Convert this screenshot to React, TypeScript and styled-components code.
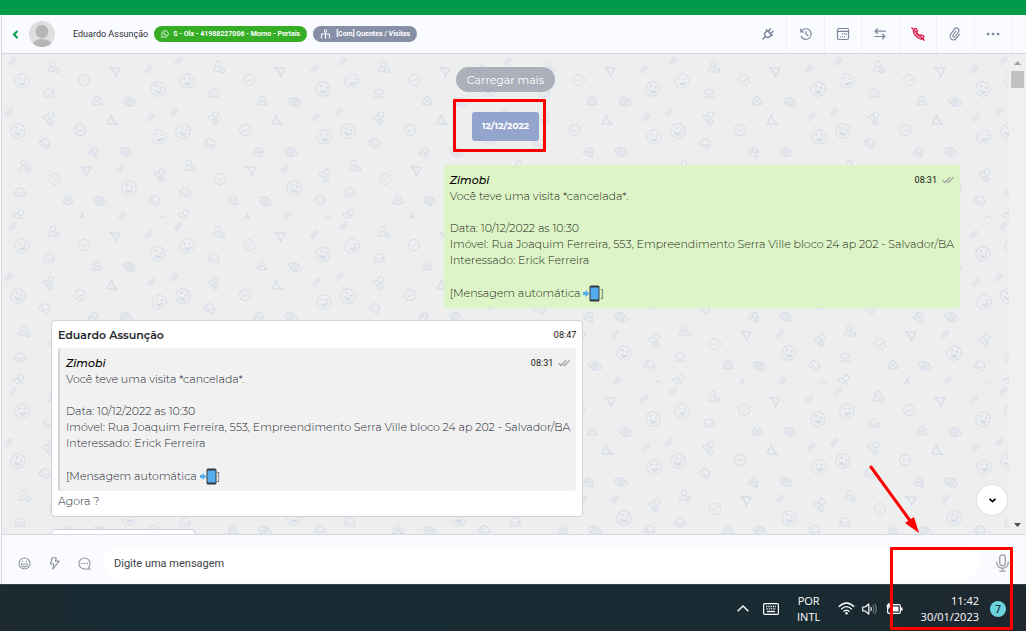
import React from "react";
import styled, { createGlobalStyle, css } from "styled-components";

const ui = `"Open Sans", "Noto Sans", sans-serif`;
const compact = `Roboto, "Open Sans", sans-serif`;
const body = `"Montserrat", Inter, "Open Sans", sans-serif`;
const line = "#d5d8e2";
const surface = "#fafbff";
const muted = "#7d869c";
const doodle = "#d9dbe8";

const GlobalStyle = createGlobalStyle`
  *, *::before, *::after { box-sizing: border-box; }
  body { margin: 0; background: ${surface}; font-family: ${ui}; }
  button, input { font: inherit; border: 0; padding: 0; background: none; color: inherit; }
  button { cursor: pointer; }
  p, h1, h2 { margin: 0; }
  svg { display: block; }
`;

const Page = styled.div`
  position: relative;
  display: flex;
  flex-direction: column;
  height: 100vh;
  overflow: hidden;
`;

const TopBar = styled.div`
  flex: 0 0 15px;
  background: #009b4a;
`;

const Main = styled.main`
  flex: 1;
  min-height: 0;
  display: flex;
  flex-direction: column;
  margin-left: 1px;
  border-left: 1px solid ${line};
`;

const Header = styled.header`
  flex: 0 0 39px;
  display: flex;
  align-items: center;
  padding: 0 14px 0 7px;
  background: ${surface};
  border-bottom: 1px solid ${line};
`;

const BackButton = styled.button`
  display: flex;
  width: 12px;
  margin-right: 8px;
  justify-content: center;
`;

const ContactName = styled.h1`
  margin: 0 6px 0 18px;
  font-family: ${compact};
  font-size: 9px;
  line-height: 16px;
  font-weight: 400;
  color: #2b2f36;
  white-space: nowrap;
`;

const Tag = styled.span<{ $color: string; $gap: number }>`
  display: flex;
  align-items: center;
  gap: ${(p) => p.$gap}px;
  height: 16px;
  padding: 0 7px;
  margin-right: 6px;
  border-radius: 8px;
  background: ${(p) => p.$color};
  color: #fff;
  font-family: ${compact};
  font-size: 7px;
  line-height: 16px;
  font-weight: 700;
  white-space: nowrap;
`;

const Tools = styled.nav`
  display: flex;
  align-self: stretch;
  flex: 0 0 262px;
  margin-left: auto;
`;

const ToolButton = styled.button<{ $danger?: boolean }>`
  flex: 1;
  display: flex;
  align-items: center;
  justify-content: center;
  border-right: 1px solid #f1f2f7;
  color: ${(p) => (p.$danger ? "#e0214f" : muted)};
`;

const ChatArea = styled.section`
  position: relative;
  flex: 1;
  min-height: 0;
  display: flex;
  background: #edefee;
`;

const Wallpaper = styled.svg`
  position: absolute;
  inset: 0;
  width: 100%;
  height: 100%;
`;

const Messages = styled.div`
  position: relative;
  flex: 1;
  display: flex;
  flex-direction: column;
  padding: 13px 49px 0;
  overflow: hidden;
  font-family: ${body};
`;

const LoadMore = styled.button`
  flex: none;
  align-self: center;
  height: 25px;
  padding: 0 11px;
  border-radius: 13px;
  background: #abb0bb;
  color: #fff;
  font-size: 11px;
  line-height: 16px;
`;

const highlight = css`
  position: absolute;
  border: 3px solid #fe0000;
  border-radius: 1px;
  pointer-events: none;
`;

const DateBadge = styled.div`
  position: relative;
  flex: none;
  align-self: center;
  margin: 20px 0 24px;
  padding: 6px 10px 7px;
  border-radius: 3px;
  background: #94a5cd;
  color: #fff;
  font-size: 9px;
  line-height: 16px;
  font-weight: 700;
`;

const DateHighlight = styled.div`
  ${highlight}
  inset: -13px -7px -11px -19px;
`;

const ClockHighlight = styled.div`
  ${highlight}
  right: 13px;
  bottom: 1px;
  width: 123px;
  height: 83px;
`;

const SentBubble = styled.article`
  flex: none;
  align-self: flex-end;
  padding: 7px 6px;
  border-radius: 3px;
  background: #dcf4c6;
  color: #1d2619;
`;

const ReceivedBubble = styled.article<{ $stub?: boolean }>`
  flex: none;
  align-self: flex-start;
  margin-top: 12px;
  padding: 6px 6px 7px;
  border: 1px solid #d0d2dc;
  border-radius: 4px;
  background: #fff;
  color: #22252b;
  ${(p) => p.$stub && "width: 144px; height: 48px;"}
`;

const Quote = styled.blockquote`
  margin: 5px 0 2px;
  padding: 7px 6px;
  border-left: 2px solid #d2d4d9;
  border-radius: 3px;
  background: #f1f1f1;
`;

const BubbleHead = styled.div`
  display: flex;
  align-items: center;
  height: 16px;
`;

const Sender = styled.h2<{ $italic?: boolean }>`
  margin-right: auto;
  color: ${(p) => (p.$italic ? "#000" : "#23262b")};
  font-size: 11px;
  line-height: 16px;
  font-weight: ${(p) => (p.$italic ? 500 : 600)};
  font-style: ${(p) => (p.$italic ? "italic" : "normal")};
`;

const Time = styled.time`
  color: #111;
  font-family: ${compact};
  font-size: 9px;
  line-height: 16px;
`;

const Text = styled.p<{ $spaced?: boolean }>`
  margin-top: ${(p) => (p.$spaced ? 16 : 0)}px;
  font-size: 11px;
  line-height: 16px;
  font-weight: 300;
`;

const Signature = styled(Text)`
  display: flex;
  align-items: center;
  gap: 3px;
  height: 16px;
  margin-top: 17px;
`;

const Closing = styled.span`
  display: flex;
  align-items: center;
`;

const Scrollbar = styled.div`
  position: relative;
  flex: 0 0 17px;
  display: flex;
  flex-direction: column;
  align-items: center;
  padding: 7px 0;
  background: #f0f0f0;
`;

const ScrollThumb = styled.div`
  width: 13px;
  height: 17px;
  margin: 6px 0 auto;
  background: #c1c1c1;
`;

const ToBottom = styled.button`
  position: absolute;
  right: 19px;
  bottom: 19px;
  display: flex;
  align-items: center;
  justify-content: center;
  width: 30px;
  height: 30px;
  border-radius: 50%;
  background: #fff;
  box-shadow: 0 0 2px rgba(0, 0, 0, 0.12);
`;

const Arrow = styled.svg`
  position: absolute;
  right: 106px;
  bottom: 0;
  pointer-events: none;
`;

const Composer = styled.form`
  flex: 0 0 50px;
  display: flex;
  align-items: center;
  padding: 7px 17px 0 7px;
  background: ${surface};
  border-top: 1px solid ${line};
  color: #8d9199;
`;

const ComposerButton = styled.button`
  display: flex;
  justify-content: center;
  width: 30px;
`;

const MessageInput = styled.input`
  flex: 1;
  min-width: 0;
  height: 32px;
  margin: 0 16px 0 4px;
  padding: 0 11px;
  border-radius: 16px;
  background: #fff;
  color: #333;
  font-family: ${compact};
  font-size: 11px;
  line-height: 16px;
  outline: 0;
  &::placeholder { color: #3c3f45; opacity: 1; }
`;

const Taskbar = styled.footer`
  flex: 0 0 47px;
  display: flex;
  align-items: center;
  justify-content: flex-end;
  padding: 1px 20px 0;
  background: linear-gradient(90deg, #1d2a30 0%, #172b34 12%, #182b33 75%, #1f272f 100%);
  border-top: 1px solid #33434a;
  color: #fff;
  font-size: 11px;
  line-height: 16px;
`;

const TrayButton = styled.button<{ $width: number }>`
  display: flex;
  justify-content: center;
  width: ${(p) => p.$width}px;
`;

const Language = styled.button`
  width: 40px;
  margin: 0 9px 0 0;
  text-align: center;
`;

const Clock = styled.div`
  margin-left: 15px;
  text-align: right;
`;

const Notifications = styled.span`
  width: 16px;
  height: 16px;
  margin-left: 11px;
  border-radius: 50%;
  background: #6bd3de;
  color: #15313a;
  font-size: 10px;
  line-height: 16px;
  font-weight: 600;
  text-align: center;
`;

type Glyph = "clip" | "user" | "smile" | "check" | "plane" | "inbox" | "users" | "eye";

const glyphs: Record<Glyph, React.ReactNode> = {
  clip: (
    <g transform="rotate(38)" strokeWidth=".8">
      <path d="M2 -2.500V2.500A2 2 0 0 1 -2 2.500V-2.500A1.400 1.400 0 0 1 .8 -2.500V2A.6 .6 0 0 1 -.6 2V-2M2 -2.500A2 2 0 0 0 -.5 -4.300" />
    </g>
  ),
  user: (
    <>
      <circle cx="0" cy="-3" r="2.800" />
      <path d="M1 4H-5C-5 1 -3 .2 -1 .2" />
      <circle cx="4" cy="3" r="2.700" />
      <path d="M2.800 3H5.200M4 1.800V4.200" />
    </>
  ),
  smile: (
    <>
      <circle r="7.200" />
      <circle cx="-2.500" cy="-2.400" r=".8" fill={doodle} />
      <circle cx="2.800" cy="-2" r=".8" fill={doodle} />
      <path d="M-3 2Q1 2.500 4 .8Q3.500 4.500 .5 4.500Q-2 4.300 -3 2Z" fill={doodle} strokeWidth=".6" />
    </>
  ),
  check: (
    <>
      <circle r="5.500" />
      <path d="M-2.600 .2L-.6 2L3 -1.800" />
    </>
  ),
  plane: <path d="M-5 -4.300L5 -3.600L.5 4.600L-1.500 -.8Z" strokeWidth="1.300" />,
  inbox: (
    <>
      <path d="M-5 4V-.5L-3 -3.500Q0 -4.500 3 -3.500L5 -.5V4Z" />
      <path d="M-5 0H-3Q-2 2.300 0 2.300T3 0H5" />
    </>
  ),
  users: (
    <>
      <circle cx="0" cy="-2.200" r="2.300" />
      <path d="M-3 4V2Q-2 .6 0 .6T3 2V4Z" />
      <path d="M-2.500 -3Q-4.500 -2.500 -3.800 0Q-5 1 -5 3.500H-3M2.500 -3Q4.500 -2.500 3.800 0Q5 1 5 3.500H3" />
    </>
  ),
  eye: (
    <g transform="rotate(24)">
      <path d="M-7 0Q-4 -4.200 0 -4.200T7 0Q4 4.200 0 4.200T-7 0Z" />
      <circle r="3.200" />
      <circle r="1.200" />
    </g>
  ),
};

const doodles: [Glyph, number, number, number?][] = [
  ["clip", 11, 7], ["user", 51, 13], ["smile", 20, 27], ["check", 82, 26],
  ["plane", 113, 18], ["clip", 147, 15], ["smile", 156, 35, 15], ["inbox", 47, 39],
  ["users", 95, 47], ["eye", 128, 48], ["clip", 7, 58], ["user", 47, 63, 40],
  ["plane", 110, 66, 180], ["clip", 149, 63], ["smile", 16, 77, 25], ["smile", 157, 83],
  ["check", 78, 76, 20], ["inbox", 43, 89, 28], ["users", 92, 98, 25], ["eye", 124, 98],
  ["plane", 84, 117], ["clip", 118, 115], ["user", 22, 112], ["user", 158, 120, 40],
  ["check", 53, 125], ["smile", 127, 134, 15], ["inbox", 18, 138], ["users", 66, 146],
  ["eye", 98, 147], ["inbox", 153, 146, 28], ["user", 17, 161, 40], ["plane", 81, 165, 180],
  ["clip", 120, 162], ["user", 161, 168],
];

const Doodles = () => (
  <Wallpaper aria-hidden="true">
    <defs>
      <pattern id="doodles" width="165" height="165" patternUnits="userSpaceOnUse">
        <g fill="none" stroke={doodle} strokeWidth="1">
          {doodles.map(([kind, x, y, turn = 0], i) => (
            <g key={i} transform={`translate(${x} ${y}) rotate(${turn})`}>{glyphs[kind]}</g>
          ))}
        </g>
      </pattern>
    </defs>
    <rect width="100%" height="100%" fill="url(#doodles)" />
  </Wallpaper>
);

const Icon = ({ size = 14, width = 1.2, children }: { size?: number; width?: number; children: React.ReactNode }) => (
  <svg width={size} height={size} viewBox="0 0 14 14" fill="none" stroke="currentColor" strokeWidth={width} strokeLinecap="round" strokeLinejoin="round" aria-hidden="true">
    {children}
  </svg>
);

const PhoneArrow = () => (
  <svg width="17" height="17" viewBox="0 0 17 17" aria-hidden="true">
    <rect x="6.500" y=".5" width="10" height="16" rx="1.500" fill="#31373d" />
    <rect x="7.500" y="2.500" width="8" height="12" fill="#55acee" />
    <path d="M0 7H2.500V5L6.500 8.500L2.500 12V10H0Z" fill="#55acee" />
  </svg>
);

const DoubleCheck = () => (
  <svg width="12" height="8" viewBox="0 0 12 8" fill="none" stroke="#a3a8a3" strokeWidth="1.300" aria-hidden="true">
    <path d="M.5 4L3 6.500L8 1.200M5.500 5.500L6.700 6.500L11.500 1.200" />
  </svg>
);

const Receipt = styled.span`
  display: flex;
  margin-left: 5px;
`;

const VisitNotice = () => (
  <>
    <BubbleHead>
      <Sender $italic>Zimobi</Sender>
      <Time>08:31</Time>
      <Receipt><DoubleCheck /></Receipt>
    </BubbleHead>
    <Text>Você teve uma visita *cancelada*.</Text>
    <Text $spaced>Data: 10/12/2022 as 10:30</Text>
    <Text>Imóvel: Rua Joaquim Ferreira, 553, Empreendimento Serra Ville bloco 24 ap 202 - Salvador/BA</Text>
    <Text>Interessado: Erick Ferreira</Text>
    <Signature>
      <span>[Mensagem automática</span>
      <Closing><PhoneArrow />]</Closing>
    </Signature>
  </>
);

const tools: { label: string; danger?: boolean; icon: React.ReactNode }[] = [
  {
    label: "Conectar",
    icon: <g transform="rotate(45 7 7)"><path d="M3 5H11M4 5V7.500A3 3 0 0 0 10 7.500V5M5.300 5V1.500M8.700 5V1.500M7 10.500V14" strokeWidth="1.500" /></g>,
  },
  { label: "Histórico", icon: <path d="M1.800 2V5H4.800M2 5A5.300 5.300 0 1 1 2.200 9.600M7 4.500V7.300L9 8.500" /> },
  {
    label: "Agenda",
    icon: (
      <>
        <rect x="1.500" y="1.500" width="11" height="11" rx="1.500" />
        <path d="M1.500 4.300H12.500" />
        <path d="M6.500 7H6.600M8.500 7H8.600M10.400 7H10.500M4.400 9.800H4.500M6.500 9.800H6.600M8.500 9.800H8.600" strokeWidth="1.300" />
      </>
    ),
  },
  { label: "Transferir", icon: <path d="M12.300 4.200H2M4.500 1.800L2 4.200L4.500 6.500M1.800 9.500H12M9.500 7.200L12 9.500L9.500 11.800" /> },
  {
    label: "Encerrar chamada",
    danger: true,
    icon: <path d="M.8 .8L13.200 13.200M3.200 1.800L5.200 1.300L6.500 4L5 5.200Q6 8 8.700 9.300L10 7.800L12.800 9L12.300 11.500Q11.500 12.500 9.500 12Q3.500 9.500 2.300 4Z" strokeWidth="1.300" />,
  },
  { label: "Anexar", icon: <g transform="rotate(35 7 7)"><path d="M10.700 4.500V9.800A3.500 3.500 0 0 1 3.700 9.800V3.400A2.500 2.500 0 0 1 8.700 3.400V9.200A1.300 1.300 0 0 1 6.100 9.200V4.500" strokeWidth="1.100" /></g> },
  { label: "Mais opções", icon: <path d="M2 7H2.100M7 7H7.100M12 7H12.100" strokeWidth="2.700" /> },
];

export default function App() {
  return (
    <Page>
      <GlobalStyle />
      <TopBar />
      <Main>
        <Header>
          <BackButton aria-label="Voltar">
            <svg width="7" height="9" viewBox="0 0 7 9" fill="none" stroke="#009b4a" strokeWidth="2"><path d="M5.500 1L2 4.500L5.500 8" /></svg>
          </BackButton>
          <svg width="26" height="26" viewBox="0 0 26 26" aria-hidden="true">
            <defs><clipPath id="avatar"><circle cx="13" cy="13" r="13" /></clipPath></defs>
            <g clipPath="url(#avatar)">
              <rect width="26" height="26" fill="#dedede" />
              <ellipse cx="13" cy="10.500" rx="6.300" ry="6.700" fill="#b5b5b5" />
              <ellipse cx="13" cy="25" rx="10" ry="7" fill="#b5b5b5" />
            </g>
          </svg>
          <ContactName>Eduardo Assunção</ContactName>
          <Tag $color="#35ae25" $gap={4}>
            <svg width="8" height="8" viewBox="0 0 14 14" fill="none" stroke="#fff" strokeWidth="1.400"><path d="M1 13L2 9.700A5.700 5.700 0 1 1 4.300 12Z" /><path d="M4.800 4.500Q5 8.500 9.500 9.400M4.800 4.500L5.800 6M8.300 8.300L9.500 9.400" strokeWidth="1.600" /></svg>
            S - Olx - 41988227006 - Morno - Portais
          </Tag>
          <Tag $color="#868fa5" $gap={5}>
            <svg width="11" height="10" viewBox="0 0 11 10" fill="none" stroke="#fff"><circle cx="5.500" cy="2" r="1.200" /><path d="M5.500 3V9.500M1.500 7.500V5H9.500V7.500" /><path d="M.8 8.500H2.200M4.800 8.500H6.200M8.800 8.500H10.200" strokeWidth="1.600" /></svg>
            [Com] Quentes / Visitas
          </Tag>
          <Tools>
            {tools.map((t) => (
              <ToolButton key={t.label} aria-label={t.label} $danger={t.danger}>
                <Icon>{t.icon}</Icon>
              </ToolButton>
            ))}
          </Tools>
        </Header>

        <ChatArea>
          <Doodles />
          <Messages>
            <LoadMore>Carregar mais</LoadMore>
            <DateBadge>
              12/12/2022
              <DateHighlight />
            </DateBadge>
            <SentBubble><VisitNotice /></SentBubble>
            <ReceivedBubble>
              <BubbleHead>
                <Sender>Eduardo Assunção</Sender>
                <Time>08:47</Time>
              </BubbleHead>
              <Quote><VisitNotice /></Quote>
              <Text>Agora ?</Text>
            </ReceivedBubble>
            <ReceivedBubble $stub />
          </Messages>
          <Scrollbar>
            <svg width="7" height="4" viewBox="0 0 7 4"><path d="M0 4L3.500 0L7 4Z" fill="#a0a0a0" /></svg>
            <ScrollThumb />
            <svg width="7" height="4" viewBox="0 0 7 4"><path d="M0 0L3.500 4L7 0Z" fill="#505050" /></svg>
          </Scrollbar>
          <ToBottom aria-label="Ir para o fim">
            <svg width="7" height="5" viewBox="0 0 7 5" fill="none" stroke="#000" strokeWidth="1.700"><path d="M.6 .8L3.500 3.600L6.400 .8" /></svg>
          </ToBottom>
          <Arrow width="52" height="70" viewBox="0 0 52 70" aria-hidden="true">
            <path d="M3 3L43 58" stroke="#fe0000" strokeWidth="3" strokeLinecap="round" />
            <path d="M51 69L37 59L46 53Z" fill="#fe0000" />
          </Arrow>
        </ChatArea>

        <Composer onSubmit={(e) => e.preventDefault()}>
          <ComposerButton type="button" aria-label="Emojis">
            <Icon size={13} width={1.1}><circle cx="7" cy="7" r="6" /><path d="M4.800 4.500V5.200M9.200 4.500V5.200M3.500 7.500H10.500A3.500 3.500 0 0 1 3.500 7.500ZM5 10H9" strokeWidth=".9" /></Icon>
          </ComposerButton>
          <ComposerButton type="button" aria-label="Respostas rápidas">
            <Icon size={13} width={1.2}><path d="M4.500 .8H9L8 4.500H12L5 13.200L6.300 7.500H2.700Z" /></Icon>
          </ComposerButton>
          <ComposerButton type="button" aria-label="Mensagens prontas">
            <Icon size={13} width={1.1}><path d="M13 13H7A6 6 0 1 1 13 7Q13 9.500 11.500 11.200Z" /><path d="M4.200 7H4.300M7 7H7.100M9.800 7H9.900" strokeWidth="1.700" /></Icon>
          </ComposerButton>
          <MessageInput aria-label="Mensagem" placeholder="Digite uma mensagem" />
          <button type="button" aria-label="Gravar áudio">
            <svg width="13" height="18" viewBox="0 0 13 18" fill="none" stroke="#9a9da3" strokeWidth="1.300"><rect x="3.700" y=".8" width="5.600" height="11" rx="2.800" /><path d="M.8 7.500V9A5.700 5.200 0 0 0 12.200 9V7.500M6.500 14.200V17M3.300 17.200H9.700" /></svg>
          </button>
        </Composer>
      </Main>

      <Taskbar>
        <TrayButton $width={20} aria-label="Ícones ocultos">
          <svg width="12" height="7" viewBox="0 0 12 7" fill="none" stroke="#fff" strokeWidth="1.300"><path d="M.6 6.300L6 1L11.400 6.300" /></svg>
        </TrayButton>
        <TrayButton $width={36} aria-label="Teclado">
          <svg width="16" height="12" viewBox="0 0 16 12" fill="none" stroke="#fff"><rect x=".6" y=".6" width="14.800" height="10.800" rx="1.200" strokeWidth="1.200" /><path d="M3 3.500H13M3.500 5.800H13" strokeDasharray="1.300 1" strokeWidth="1.300" /><path d="M4 8.500H12" strokeWidth="1.300" /></svg>
        </TrayButton>
        <Language>POR<br />INTL</Language>
        <TrayButton $width={18} aria-label="Rede">
          <svg width="17" height="13" viewBox="0 0 17 13" fill="none" stroke="#fff" strokeWidth="1.300"><path d="M.8 4.800Q8.500 -2.800 16.200 4.800M3.200 7.300Q8.500 2 13.800 7.300M5.500 9.600Q8.500 6.800 11.500 9.600" /><circle cx="8.500" cy="11.300" r="1.200" fill="#fff" stroke="none" /></svg>
        </TrayButton>
        <TrayButton $width={28} aria-label="Volume">
          <svg width="16" height="12" viewBox="0 0 16 12" fill="none" stroke="#fff" strokeWidth="1.200"><path d="M.7 4H3.200L6.800 .9V11.100L3.200 8H.7Z" strokeLinejoin="round" /><path d="M8.700 4Q10 6 8.700 8" /><path d="M10.700 2.300Q13 6 10.700 9.700M12.700 .8Q16 6 12.700 11.200" stroke="#68757b" /></svg>
        </TrayButton>
        <TrayButton $width={22} aria-label="Bateria">
          <svg width="17" height="13" viewBox="0 0 17 13"><rect x="1.600" y="2.600" width="12.800" height="8.800" rx="1.600" fill="none" stroke="#fff" strokeWidth="1.200" /><rect x="4" y="4.500" width="8.500" height="5" fill="#fff" /><path d="M15 5.500H16.500V8.500H15Z" fill="#fff" /><path d="M3.500 0L0 4.500H2.500L1.500 8L5.500 3.200H3Z" fill="#fff" /></svg>
        </TrayButton>
        <Clock>11:42<br />30/01/2023</Clock>
        <Notifications>7</Notifications>
      </Taskbar>
      <ClockHighlight />
    </Page>
  );
}
